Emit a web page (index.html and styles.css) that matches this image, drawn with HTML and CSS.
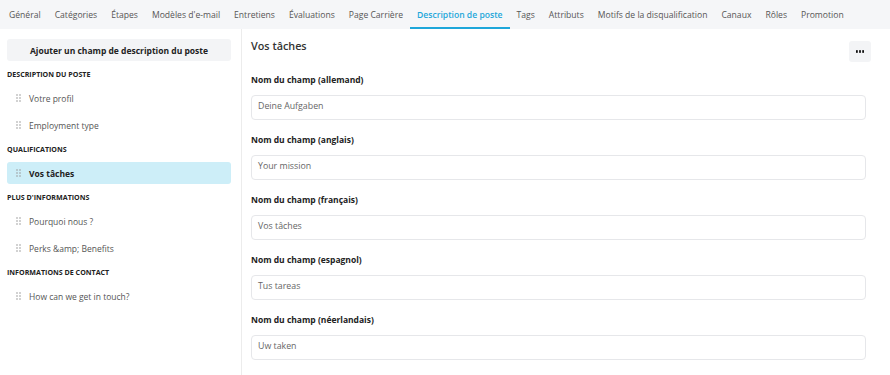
FILE: index.html
```html
<!DOCTYPE html>
<html lang="fr">
<head>
<meta charset="utf-8">
<link rel="stylesheet" href="styles.css">
</head>
<body>
<nav class="tabs">
  <a class="tab">Général</a>
  <a class="tab">Catégories</a>
  <a class="tab">Étapes</a>
  <a class="tab">Modèles d'e-mail</a>
  <a class="tab">Entretiens</a>
  <a class="tab">Évaluations</a>
  <a class="tab">Page Carrière</a>
  <a class="tab active">Description de poste</a>
  <a class="tab">Tags</a>
  <a class="tab">Attributs</a>
  <a class="tab">Motifs de la disqualification</a>
  <a class="tab">Canaux</a>
  <a class="tab">Rôles</a>
  <a class="tab">Promotion</a>
</nav>
<div class="layout">
  <aside class="sidebar">
    <button class="add-btn">Ajouter un champ de description du poste</button>
    <div class="group-title">Description du poste</div>
    <div class="item"><svg class="grip" viewBox="0 0 5 8"><circle cx="1" cy="1" r="0.8"/><circle cx="4" cy="1" r="0.8"/><circle cx="1" cy="4" r="0.8"/><circle cx="4" cy="4" r="0.8"/><circle cx="1" cy="7" r="0.8"/><circle cx="4" cy="7" r="0.8"/></svg><span>Votre profil</span></div>
    <div class="item"><svg class="grip" viewBox="0 0 5 8"><circle cx="1" cy="1" r="0.8"/><circle cx="4" cy="1" r="0.8"/><circle cx="1" cy="4" r="0.8"/><circle cx="4" cy="4" r="0.8"/><circle cx="1" cy="7" r="0.8"/><circle cx="4" cy="7" r="0.8"/></svg><span>Employment type</span></div>
    <div class="group-title">Qualifications</div>
    <div class="item selected"><svg class="grip" viewBox="0 0 5 8"><circle cx="1" cy="1" r="0.8"/><circle cx="4" cy="1" r="0.8"/><circle cx="1" cy="4" r="0.8"/><circle cx="4" cy="4" r="0.8"/><circle cx="1" cy="7" r="0.8"/><circle cx="4" cy="7" r="0.8"/></svg><span>Vos tâches</span></div>
    <div class="group-title">Plus d'informations</div>
    <div class="item"><svg class="grip" viewBox="0 0 5 8"><circle cx="1" cy="1" r="0.8"/><circle cx="4" cy="1" r="0.8"/><circle cx="1" cy="4" r="0.8"/><circle cx="4" cy="4" r="0.8"/><circle cx="1" cy="7" r="0.8"/><circle cx="4" cy="7" r="0.8"/></svg><span>Pourquoi nous ?</span></div>
    <div class="item"><svg class="grip" viewBox="0 0 5 8"><circle cx="1" cy="1" r="0.8"/><circle cx="4" cy="1" r="0.8"/><circle cx="1" cy="4" r="0.8"/><circle cx="4" cy="4" r="0.8"/><circle cx="1" cy="7" r="0.8"/><circle cx="4" cy="7" r="0.8"/></svg><span>Perks &amp;amp; Benefits</span></div>
    <div class="group-title">Informations de contact</div>
    <div class="item"><svg class="grip" viewBox="0 0 5 8"><circle cx="1" cy="1" r="0.8"/><circle cx="4" cy="1" r="0.8"/><circle cx="1" cy="4" r="0.8"/><circle cx="4" cy="4" r="0.8"/><circle cx="1" cy="7" r="0.8"/><circle cx="4" cy="7" r="0.8"/></svg><span>How can we get in touch?</span></div>
  </aside>
  <main class="main">
    <div class="header">
      <h1 class="title">Vos tâches</h1>
      <button class="more-btn"><svg viewBox="0 0 9 3"><rect x="0" y="0" width="2" height="3"/><rect x="3.5" y="0" width="2" height="3"/><rect x="7" y="0" width="2" height="3"/></svg></button>
    </div>
    <div class="field">
      <label class="label">Nom du champ (allemand)</label>
      <div class="input">Deine Aufgaben</div>
    </div>
    <div class="field">
      <label class="label">Nom du champ (anglais)</label>
      <div class="input">Your mission</div>
    </div>
    <div class="field">
      <label class="label">Nom du champ (français)</label>
      <div class="input">Vos tâches</div>
    </div>
    <div class="field">
      <label class="label">Nom du champ (espagnol)</label>
      <div class="input">Tus tareas</div>
    </div>
    <div class="field">
      <label class="label">Nom du champ (néerlandais)</label>
      <div class="input">Uw taken</div>
    </div>
  </main>
</div>
</body>
</html>
```

FILE: styles.css
```css
* { box-sizing: border-box; }
html, body { margin: 0; padding: 0; }
body {
  font-family: "Open Sans", "Liberation Sans", sans-serif;
  background: #fff;
  color: #333;
  width: 890px;
  height: 375px;
  overflow: hidden;
}
.tabs {
  display: flex;
  height: 29px;
  background: #f5f6f8;
  padding-left: 2px;
}
.tab {
  padding: 4px 7px 0;
  font-size: 8.6px;
  line-height: 23px;
  color: #555;
  white-space: nowrap;
  border-bottom: 2px solid transparent;
}
.tab.active {
  color: #1ea7da;
  font-weight: 600;
  border-bottom-color: #1ea7da;
}
.layout {
  display: flex;
  height: 346px;
}
.sidebar {
  width: 242px;
  flex: none;
  border-right: 1px solid #ececec;
  padding: 10px 10px 0 7px;
  display: flex;
  flex-direction: column;
  gap: 5px;
}
.add-btn {
  height: 22px;
  border: none;
  border-radius: 3px;
  background: #f3f4f6;
  font-family: inherit;
  font-size: 8.5px;
  font-weight: 700;
  color: #222;
  padding: 0;
}
.group-title {
  height: 12px;
  line-height: 12px;
  margin: 2px 0;
  font-size: 7.1px;
  font-weight: 700;
  text-transform: uppercase;
  color: #222;
}
.item {
  height: 22px;
  display: flex;
  align-items: center;
  padding-left: 9px;
  border-radius: 3px;
  font-size: 8.5px;
  color: #555;
}
.grip {
  width: 5px;
  height: 8px;
  fill: #9a9a9a;
  margin-right: 8px;
}
.item.selected {
  background: #cdeef8;
  color: #222;
  font-weight: 700;
}
.main {
  flex: 1;
  padding: 9px 24px 0 9px;
}
.header {
  display: flex;
  justify-content: space-between;
  align-items: flex-start;
  margin-bottom: 11px;
}
.title {
  margin: 0;
  font-size: 10.8px;
  line-height: 16px;
  font-weight: 600;
  color: #333;
}
.more-btn {
  width: 22px;
  height: 21px;
  margin-top: 3px;
  margin-right: -5px;
  border: none;
  border-radius: 3px;
  background: #f3f4f6;
  padding: 0;
  display: flex;
  align-items: center;
  justify-content: center;
}
.more-btn svg {
  width: 8px;
  height: 3px;
  fill: #111;
}
.field {
  margin-bottom: 13px;
}
.label {
  display: block;
  font-size: 8.5px;
  line-height: 14px;
  font-weight: 700;
  color: #222;
  margin-bottom: 8px;
}
.input {
  height: 25px;
  border: 1px solid #e6e7ea;
  border-radius: 4px;
  padding: 0 6px;
  font-size: 8.8px;
  line-height: 21px;
  color: #666;
}
```
